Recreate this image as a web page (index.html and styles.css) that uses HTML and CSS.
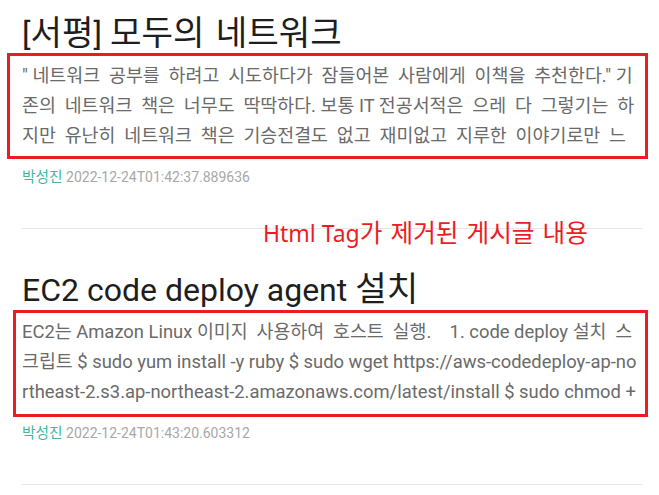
FILE: index.html
```html
<!DOCTYPE html>
<html lang="ko">
<head>
<meta charset="utf-8">
<title>게시글 목록</title>
<link rel="stylesheet" href="styles.css">
</head>
<body>
<main class="post-list">
  <article class="post">
    <h2 class="post-title">[<span class="ko">서평</span>] <span class="ko">모두의 네트워크</span></h2>
    <div class="post-body mark-a">
      <p class="post-desc">
        <span class="line">" <span class="ko">네트워크 공부를 하려고 시도하다가 잠들어본 사람에게 이책을 추천한다</span>." <span class="ko">기</span></span>
        <span class="line"><span class="ko">존의 네트워크 책은 너무도 딱딱하다</span>. <span class="ko">보통</span> IT <span class="ko">전공서적은 으레 다 그렇기는 하</span></span>
        <span class="line"><span class="ko">지만 유난히 네트워크 책은 기승전결도 없고 재미없고 지루한 이야기로만 느</span></span>
      </p>
    </div>
    <div class="post-meta"><span class="author ko">박성진</span> <span class="date">2022-12-24T01:42:37.889636</span></div>
  </article>
  <hr class="divider">
  <div class="note">Html Tag<span class="ko">가 제거된 게시글 내용</span></div>
  <article class="post">
    <h2 class="post-title">EC2 code deploy agent <span class="ko">설치</span></h2>
    <div class="post-body mark-b">
      <p class="post-desc">
        <span class="line">EC2<span class="ko">는</span> Amazon Linux <span class="ko">이미지 사용하여 호스트 실행</span>.&nbsp;&nbsp;&nbsp; 1. code deploy <span class="ko">설치 스</span></span>
        <span class="line"><span class="ko">크립트</span> $ sudo yum install -y ruby $ sudo wget https://aws-codedeploy-ap-no</span>
        <span class="line">rtheast-2.s3.ap-northeast-2.amazonaws.com/latest/install $ sudo chmod +</span>
      </p>
    </div>
    <div class="post-meta"><span class="author ko">박성진</span> <span class="date">2022-12-24T01:43:20.603312</span></div>
  </article>
  <hr class="divider">
</main>
</body>
</html>
```
FILE: styles.css
```css
html, body {
  margin: 0;
  padding: 0;
  background: #ffffff;
}

body {
  font-family: Roboto, "Noto Sans CJK KR", sans-serif;
}

.ko {
  font-family: "Noto Sans CJK KR", sans-serif;
  line-height: 1;
}

.post-list {
  position: relative;
  width: 620px;
  padding: 15px 0 0 22px;
}

.post {
  display: flex;
  flex-direction: column;
}

.post-title {
  margin: 0;
  font-size: 32px;
  line-height: 38px;
  font-weight: 400;
  color: #1e1e1e;
}

.post-title .ko {
  font-size: 1.07em;
  line-height: 0.85;
  word-spacing: 0.05em;
}

.post-body {
  position: relative;
  margin-top: 8px;
}

.post-body::after {
  content: "";
  position: absolute;
  border: 3px solid #ec1c24;
  pointer-events: none;
}

.mark-a::after {
  top: -8px;
  bottom: -8px;
  left: -15px;
  right: -6px;
}

.mark-b::after {
  top: -7px;
  bottom: -10px;
  left: -9px;
  right: -6px;
}

.post-desc {
  margin: 0;
  font-size: 18.4px;
  line-height: 30px;
  height: 90px;
  overflow: hidden;
  color: #6a6a6a;
}

.post-desc .ko {
  word-spacing: 0.2em;
}

.line {
  display: block;
  white-space: nowrap;
}

.post-meta {
  margin-top: 16px;
  font-size: 14px;
  line-height: 20px;
}

.author {
  color: #3cb99f;
  font-size: 1.05em;
}

.date {
  color: #a8a8a8;
}

.divider {
  margin: 41px 0 42px;
  border: 0;
  border-top: 1px solid #e6e6e6;
  height: 0;
}

.divider:last-child {
  margin-bottom: 0;
}

.note {
  position: absolute;
  left: 263px;
  top: 218px;
  font-family: "Noto Sans", "Noto Sans CJK KR", sans-serif;
  font-size: 23px;
  line-height: 30px;
  color: #ec1c24;
}

.note .ko {
  font-size: 1.07em;
  word-spacing: 0.05em;
}
```
